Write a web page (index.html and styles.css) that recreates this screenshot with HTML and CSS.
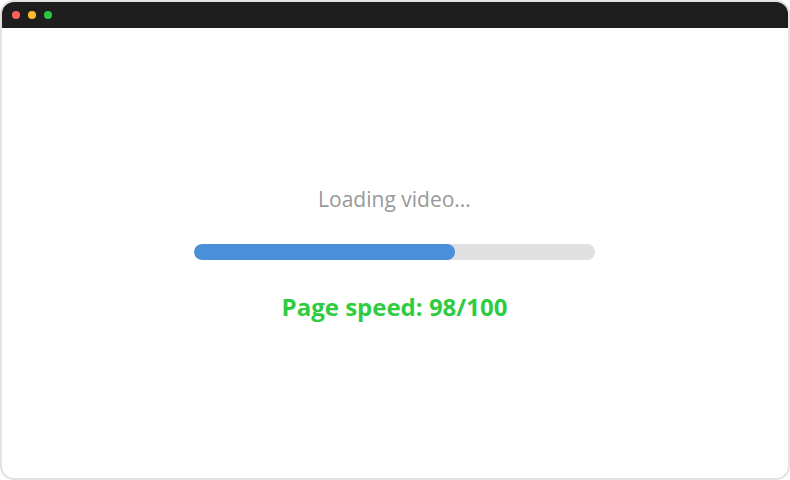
FILE: index.html
```html
<!DOCTYPE html>
<html lang="en">
<head>
  <meta charset="UTF-8">
  <title>Loading video</title>
  <link rel="stylesheet" href="styles.css">
</head>
<body>
  <div class="window">
    <div class="titlebar">
      <span class="dot red"></span>
      <span class="dot yellow"></span>
      <span class="dot green"></span>
    </div>
    <div class="content">
      <div class="loading">Loading video...</div>
      <div class="progress">
        <div class="progress-fill" style="width: 65%"></div>
      </div>
      <div class="speed">Page speed: 98/100</div>
    </div>
  </div>
</body>
</html>
```

FILE: styles.css
```css
html, body {
  margin: 0;
  height: 100%;
}
body {
  font-family: "Open Sans", "Liberation Sans", sans-serif;
  background: #fff;
}
.window {
  box-sizing: border-box;
  width: 790px;
  height: 480px;
  border: 2px solid #e2e2e2;
  border-radius: 14px;
  overflow: hidden;
  display: flex;
  flex-direction: column;
}
.titlebar {
  height: 26px;
  background: #1e1e1e;
  display: flex;
  align-items: center;
  gap: 8px;
  padding-left: 10px;
  flex-shrink: 0;
}
.dot {
  width: 8px;
  height: 8px;
  border-radius: 50%;
}
.red { background: #ff5f57; }
.yellow { background: #febc2e; }
.green { background: #28c840; }
.content {
  flex: 1;
  display: flex;
  flex-direction: column;
  align-items: center;
  justify-content: center;
  padding-right: 1px;
}
.loading {
  font-size: 21px;
  color: #999;
  line-height: 28px;
}
.progress {
  width: 401px;
  height: 16px;
  margin: 31px 0 32px;
  background: #e0e0e0;
  border-radius: 8px;
  overflow: hidden;
}
.progress-fill {
  height: 100%;
  background: #4a90d9;
  border-radius: 8px;
}
.speed {
  font-size: 24px;
  font-weight: bold;
  color: #2ecc40;
  line-height: 30px;
}
```
